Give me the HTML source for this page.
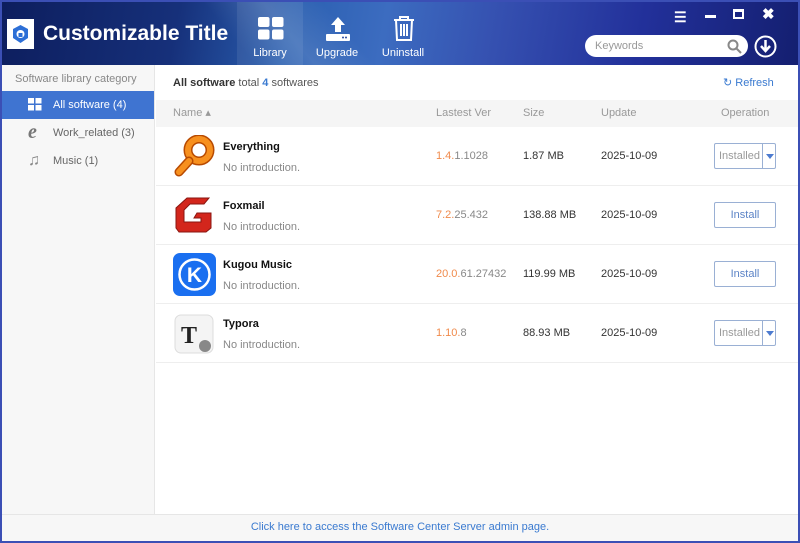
<!DOCTYPE html>
<html><head><style>
*{margin:0;padding:0;box-sizing:border-box}
body{width:800px;height:543px;overflow:hidden;font-family:"Liberation Sans",sans-serif;font-size:11px;color:#333;background:#3b4fb5;position:relative}
.win{position:absolute;left:2px;top:2px;width:796px;height:539px;background:#fff;overflow:hidden}
.hdr{position:absolute;left:0;top:0;width:796px;height:63px;background:linear-gradient(100deg,#0d1e5e 0%,#16307a 22%,#2a5fb0 36%,#3c6cc0 48%,#3550b0 62%,#22309a 80%,#141f70 100%);overflow:hidden}
.band{position:absolute;left:230px;top:-20px;width:120px;height:110px;background:linear-gradient(90deg,rgba(255,255,255,0.0),rgba(255,255,255,0.12),rgba(255,255,255,0));transform:skewX(40deg)}
.logo{position:absolute;left:5px;top:17px;width:27px;height:30px;background:#fff}
.title{position:absolute;left:41px;top:20px;color:#fff;font-size:21px;font-weight:bold}
.tab{position:absolute;top:0;height:63px;color:#fff;font-size:11px;text-align:center}
.tab span{position:absolute;bottom:6px;left:0;right:0}
.side{position:absolute;left:0;top:63px;width:153px;height:449px;background:#f7f7f7;border-right:1px solid #e6e6e6}
.side .h{color:#888;padding:8px 0 0 13px;font-size:11px;height:26px}
.side .it{height:28px;line-height:28px;padding-left:51px;color:#666;position:relative}
.side .it.on{background:#3f74d1;color:#fff}
.ico{position:absolute;left:26px;top:7px}
.main{position:absolute;left:154px;top:63px;right:0;height:449px}
.row{position:absolute;left:0;right:0;height:59px;border-bottom:1px solid #eee}
.foot{position:absolute;left:0;top:512px;width:796px;height:27px;background:#f7f7f7;border-top:1px solid #e6e6e6;text-align:center;line-height:24px;color:#3a7ad0}
.c{position:absolute;top:0;line-height:59px}
.nm{position:absolute;left:67px;top:14px;font-weight:bold;color:#111}
.ds{position:absolute;left:67px;top:35px;color:#888}
.btn{position:absolute;left:558px;top:16px;width:62px;height:26px;border:1px solid #9ab0d4;border-radius:2px;text-align:center;line-height:24px;color:#5b83c6}
.btn.ins{color:#999;text-align:left;padding-left:4px}
.btn.ins:after{content:"";position:absolute;left:47px;top:0;height:24px;border-left:1px solid #9ab0d4}
.btn.ins b{position:absolute;left:51px;top:10px;border:4px solid transparent;border-top:5px solid #4d7bd0}
.o{color:#f08a4b}.g{color:#888}
</style></head><body><div class="win">
<div class="hdr">
 <div class="band"></div>
 <div class="logo"><svg width="27" height="30"><path d="M13.5 6 L21 10 V19 L13.5 24 L6 19 V10Z" fill="#2d6fd6"/><circle cx="13.5" cy="15" r="4" fill="#fff"/><rect x="11.5" y="14" width="4" height="4" fill="#2d6fd6"/></svg></div>
 <div class="title">Customizable Title</div>
 <div class="tab" style="left:235px;width:66px;background:rgba(255,255,255,0.08)"><svg style="position:absolute;left:21px;top:15px" width="26" height="23"><rect x="0" y="0" width="11.5" height="10" rx="2" fill="#fff"/><rect x="14" y="0" width="11.5" height="10" rx="2" fill="#fff"/><rect x="0" y="12.5" width="11.5" height="10" rx="2" fill="#fff"/><rect x="14" y="12.5" width="11.5" height="10" rx="2" fill="#fff"/></svg><span>Library</span></div>
 <div class="tab" style="left:303px;width:64px"><svg style="position:absolute;left:20px;top:14px" width="26" height="26"><path d="M13 1 L20 9 H16 V16 H10 V9 H6Z" fill="#fff"/><rect x="1" y="18" width="24" height="7" rx="1" fill="#fff"/><circle cx="18" cy="21.5" r="1" fill="#2a4aa0"/><circle cx="21" cy="21.5" r="1" fill="#2a4aa0"/></svg><span>Upgrade</span></div>
 <div class="tab" style="left:372px;width:58px"><svg style="position:absolute;left:19px;top:14px" width="22" height="25" fill="none" stroke="#fff" stroke-width="2"><path d="M1 4 H21 M7 4 V1 H15 V4 M3 4 L4 24 H18 L19 4 M8 8 V20 M11 8 V20 M14 8 V20"/></svg><span>Uninstall</span></div>
 <div style="position:absolute;left:672px;top:7px;color:#fff;font-size:14px;font-weight:bold">☰</div>
 <div style="position:absolute;left:703px;top:13px;width:11px;height:3px;background:#fff"></div>
 <div style="position:absolute;left:731px;top:7px;width:11px;height:10px;border:2px solid #fff;border-top-width:3px"></div>
 <div style="position:absolute;left:760px;top:3px;color:#fff;font-size:15px;font-weight:bold">✖</div>
 <div style="position:absolute;left:583px;top:33px;width:163px;height:22px;background:#fff;border-radius:11px;color:#999;padding-left:10px;line-height:22px;font-size:11px">Keywords<svg style="position:absolute;right:6px;top:4px" width="15" height="15" fill="none" stroke="#888" stroke-width="2"><circle cx="6" cy="6" r="4.5"/><path d="M9.5 9.5 L14 14"/></svg></div>
 <svg style="position:absolute;left:752px;top:33px" width="23" height="23"><circle cx="11.5" cy="11.5" r="10" fill="none" stroke="#fff" stroke-width="2"/><path d="M11.5 5 V14 M7 11 L11.5 16 L16 11" stroke="#fff" stroke-width="2.5" fill="none"/></svg>
</div>
<div class="side">
 <div class="h">Software library category</div>
 <div class="it on"><svg class="ico" width="14" height="13"><rect x="0" y="0" width="6" height="5.5" fill="#fff"/><rect x="7.5" y="0" width="6" height="5.5" fill="#fff"/><rect x="0" y="7" width="6" height="5.5" fill="#fff"/><rect x="7.5" y="7" width="6" height="5.5" fill="#fff"/></svg>All software (4)</div>
 <div class="it"><span class="ico" style="top:-1px;color:#777;font-size:20px;font-style:italic;font-weight:bold;font-family:'Liberation Serif',serif">e</span>Work_related (3)</div>
 <div class="it"><span class="ico" style="top:0;color:#888;font-size:16px">♫</span>Music (1)</div>
</div>
<div class="main">
 <div style="position:absolute;left:17px;top:12px;color:#555"><b style="color:#333">All software</b> total <b style="color:#3a7ad0">4</b> softwares</div>
 <div style="position:absolute;left:567px;top:11px;color:#3a7ad0">↻ Refresh</div>
 <div style="position:absolute;left:0;right:0;top:35px;height:27px;background:#f5f5f5;color:#999;line-height:27px">
  <span style="position:absolute;left:17px">Name ▴</span><span style="position:absolute;left:280px">Lastest Ver</span><span style="position:absolute;left:367px">Size</span><span style="position:absolute;left:445px">Update</span><span style="position:absolute;left:565px">Operation</span></div>
 <div class="row" style="top:62px">
  <svg style="position:absolute;left:17px;top:8px" width="44" height="44"><circle cx="26" cy="15" r="11" fill="none" stroke="#b84a00" stroke-width="9"/><circle cx="26" cy="15" r="11" fill="none" stroke="#f7901e" stroke-width="6"/><path d="M16 26 L6 37" stroke="#b84a00" stroke-width="9" stroke-linecap="round"/><path d="M16 26 L6 37" stroke="#f7901e" stroke-width="6" stroke-linecap="round"/></svg>
  <div class="nm">Everything</div><div class="ds">No introduction.</div>
  <div class="c" style="left:280px"><span class="o">1.4.</span><span class="g">1.1028</span></div><div class="c" style="left:367px">1.87 MB</div><div class="c" style="left:445px">2025-10-09</div>
  <div class="btn ins">Installed<b></b></div></div>
 <div class="row" style="top:121px">
  <svg style="position:absolute;left:17px;top:8px" width="42" height="42"><path d="M14 4 H36 L31 10 H17 L11 16 V28 H28 V24 H21 L24 19 H38 V34 L33 38 H6 L3 34 V14Z" fill="#d3261c" stroke="#8a1510" stroke-width="1"/></svg>
  <div class="nm">Foxmail</div><div class="ds">No introduction.</div>
  <div class="c" style="left:280px"><span class="o">7.2.</span><span class="g">25.432</span></div><div class="c" style="left:367px">138.88 MB</div><div class="c" style="left:445px">2025-10-09</div>
  <div class="btn">Install</div></div>
 <div class="row" style="top:180px">
  <svg style="position:absolute;left:17px;top:8px" width="43" height="43"><rect width="43" height="43" rx="7" fill="#1a6ff0"/><circle cx="21.5" cy="21.5" r="15" fill="none" stroke="#fff" stroke-width="2.5"/><text x="21.5" y="29" text-anchor="middle" font-family="Liberation Sans" font-weight="bold" font-size="21" fill="#fff">K</text></svg>
  <div class="nm">Kugou Music</div><div class="ds">No introduction.</div>
  <div class="c" style="left:280px"><span class="o">20.0.</span><span class="g">61.27432</span></div><div class="c" style="left:367px">119.99 MB</div><div class="c" style="left:445px">2025-10-09</div>
  <div class="btn">Install</div></div>
 <div class="row" style="top:239px">
  <svg style="position:absolute;left:17px;top:9px" width="44" height="44"><rect x="2" y="2" width="38" height="38" rx="6" fill="#f4f4f4" stroke="#ddd"/><text x="16" y="30" text-anchor="middle" font-family="Liberation Serif" font-weight="bold" font-size="24" fill="#222">T</text><circle cx="32" cy="33" r="6" fill="#888"/></svg>
  <div class="nm">Typora</div><div class="ds">No introduction.</div>
  <div class="c" style="left:280px"><span class="o">1.10.</span><span class="g">8</span></div><div class="c" style="left:367px">88.93 MB</div><div class="c" style="left:445px">2025-10-09</div>
  <div class="btn ins">Installed<b></b></div></div>
</div>
<div class="foot">Click here to access the Software Center Server admin page.</div>
</div></body></html>
